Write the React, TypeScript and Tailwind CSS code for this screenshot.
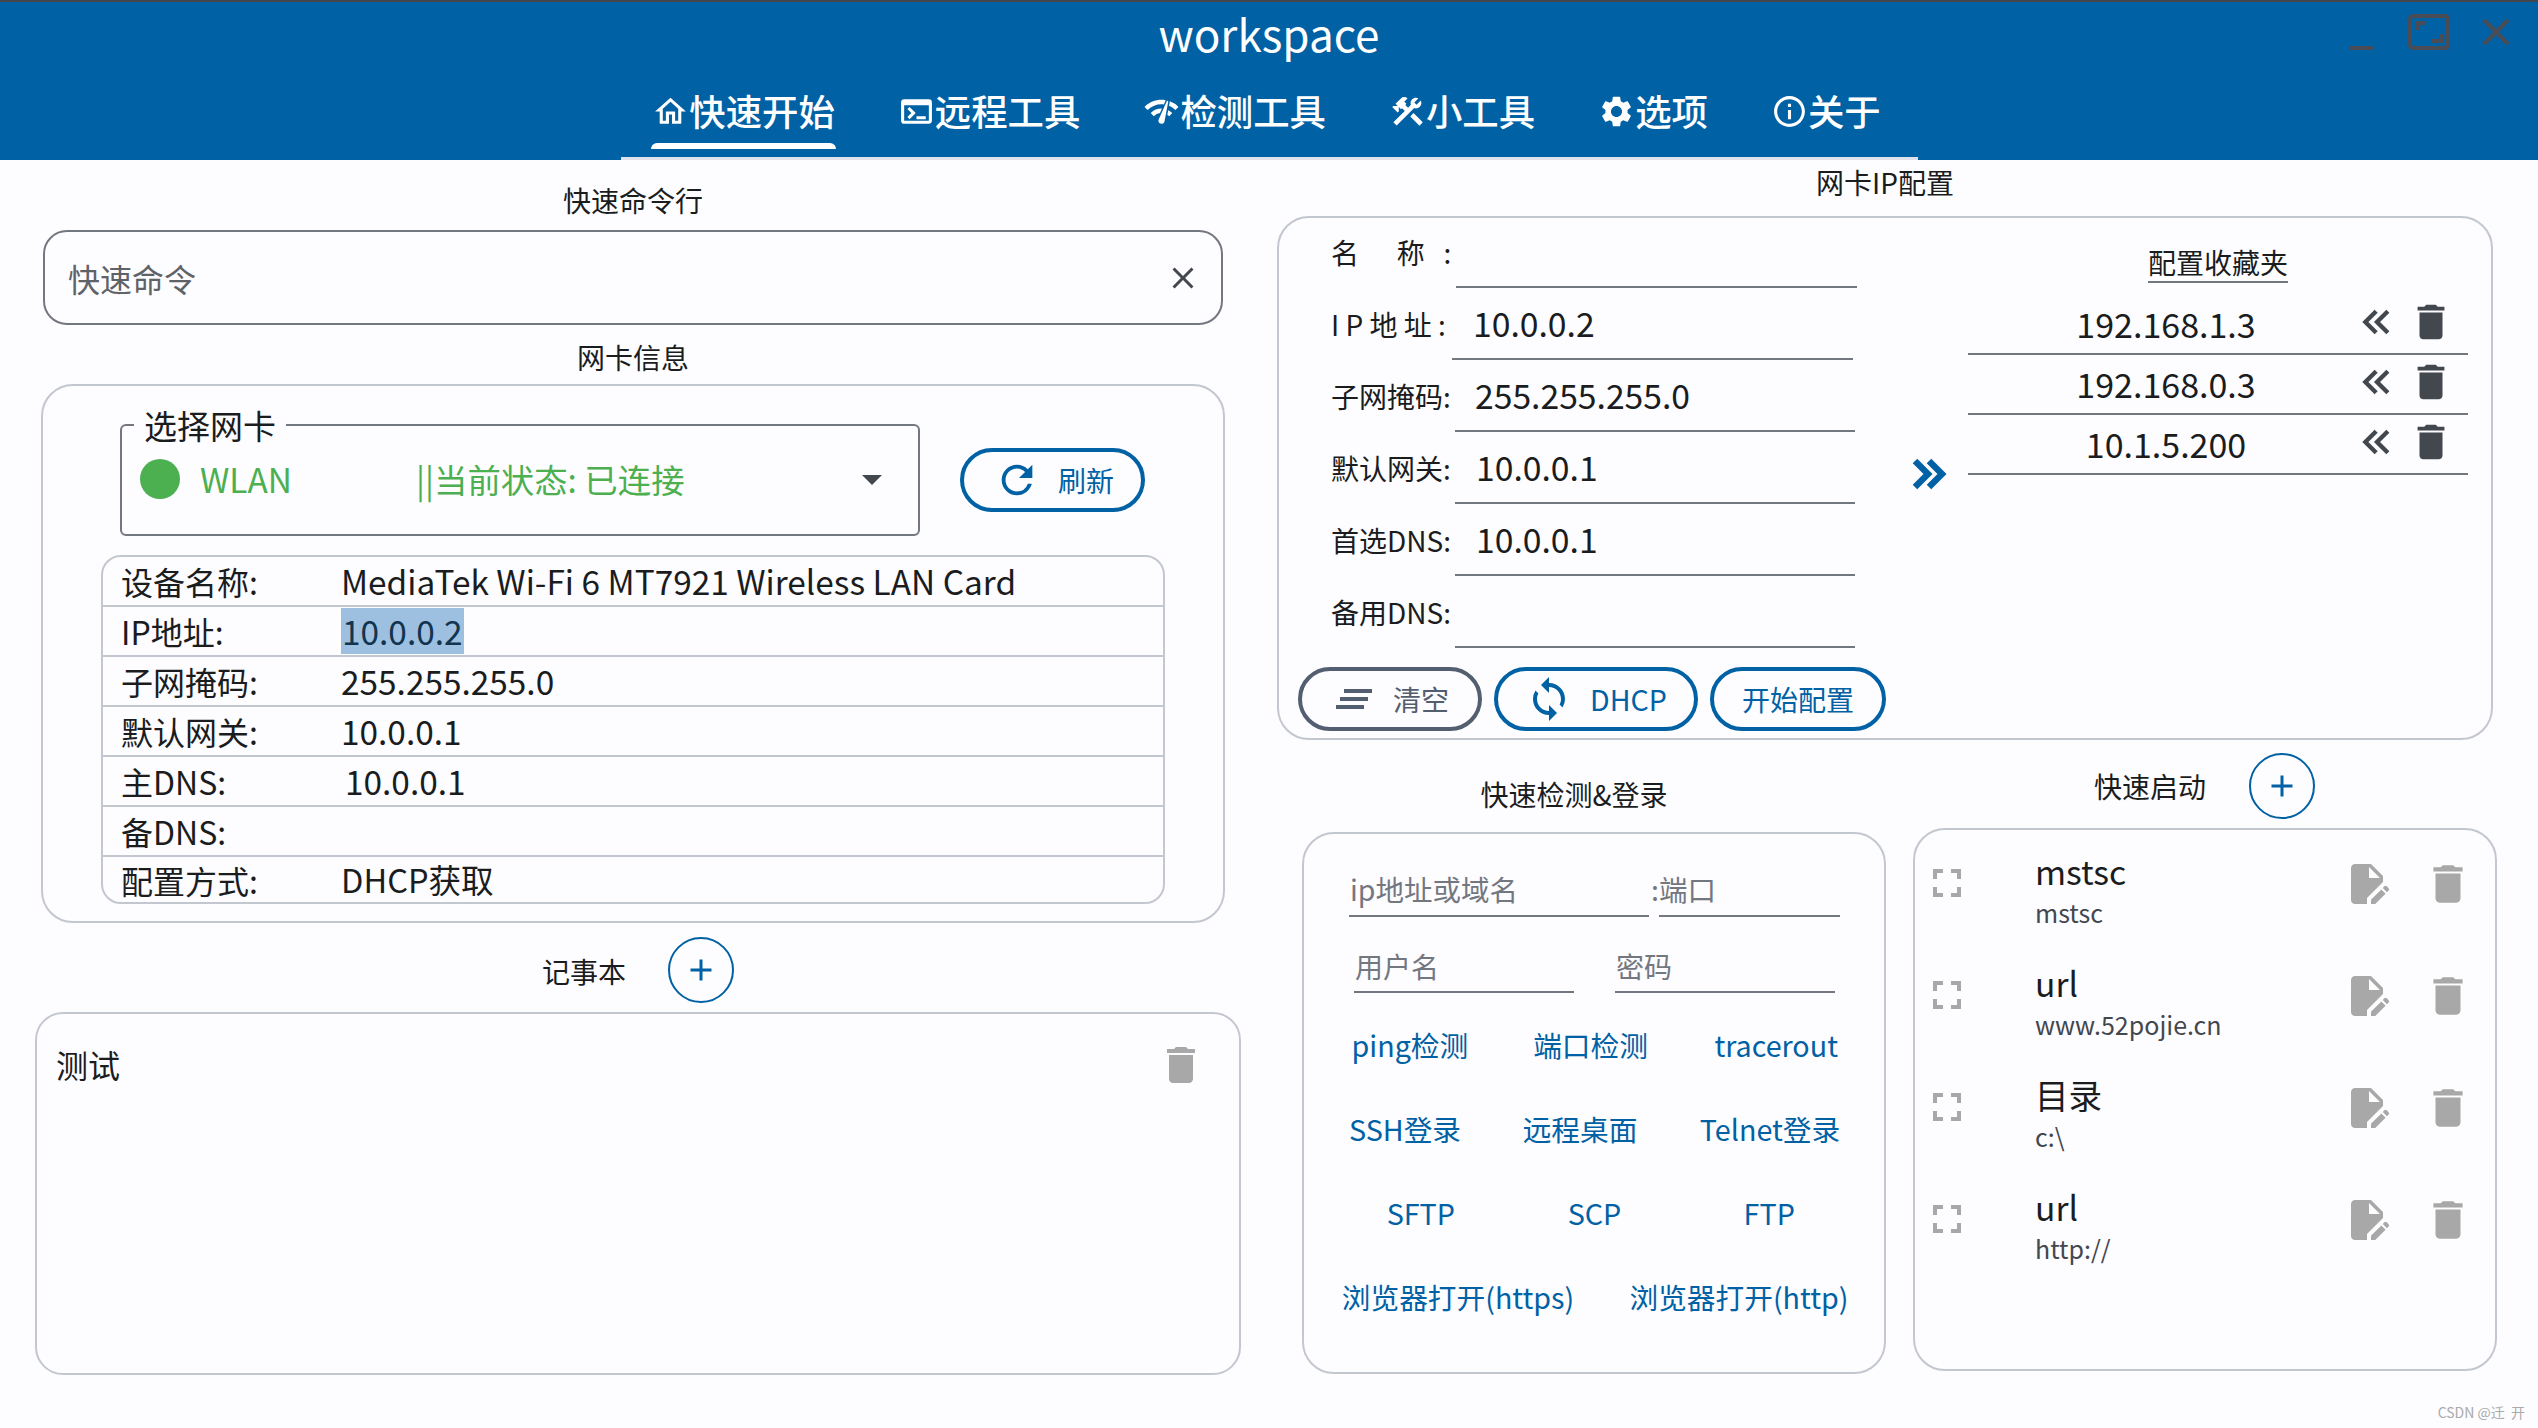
import React from "react";
import {
  MdOutlineHome, MdOutlineTerminal, MdNetworkCheck, MdConstruction, MdSettings, MdInfoOutline,
  MdRefresh, MdSync, MdClearAll,
  MdDelete, MdEditDocument, MdFullscreen, MdAdd, MdClose, MdArrowDropDown,
} from "react-icons/md";

const tabs = [
  { icon: MdOutlineHome, label: "快速开始", active: true },
  { icon: MdOutlineTerminal, label: "远程工具" },
  { icon: MdNetworkCheck, label: "检测工具" },
  { icon: MdConstruction, label: "小工具" },
  { icon: MdSettings, label: "选项" },
  { icon: MdInfoOutline, label: "关于" },
];

const netInfo = [
  { k: "设备名称:", v: "MediaTek Wi-Fi 6 MT7921 Wireless LAN Card", c: "text-[33.4px]" },
  { k: "IP地址:", v: "10.0.0.2", c: "hl" },
  { k: "子网掩码:", v: "255.255.255.0", c: "text-[33.4px]" },
  { k: "默认网关:", v: "10.0.0.1", c: "text-[33.4px]" },
  { k: "主DNS:", v: "10.0.0.1", c: "ml-[4px] text-[33.4px]" },
  { k: "备DNS:", v: "", c: "" },
  { k: "配置方式:", v: "DHCP获取", c: "text-[32.6px]" },
];

const formRows = [
  { k: "名\u00a0\u00a0\u00a0\u00a0\u00a0\u00a0称\u00a0\u00a0\u00a0:", v: "", f: "ml-[158px] w-[401px]", val: "" },
  { k: "I P 地 址 :", v: "10.0.0.2", f: "ml-[154px] w-[401px]", val: "pl-[21px]" },
  { k: "子网掩码:", v: "255.255.255.0", f: "ml-[157px] w-[400px]", val: "pl-[20px]" },
  { k: "默认网关:", v: "10.0.0.1", f: "ml-[157px] w-[400px]", val: "pl-[21px]" },
  { k: "首选DNS:", v: "10.0.0.1", f: "ml-[157px] w-[400px]", val: "pl-[21px]" },
  { k: "备用DNS:", v: "", f: "ml-[157px] w-[400px]", val: "" },
];

const favs = ["192.168.1.3", "192.168.0.3", "10.1.5.200"];

const actionRows = [
  [["ping检测", "w-[206px]"], ["端口检测", "w-[156px]"], ["tracerout", "w-[216px]"]],
  [["SSH登录", "w-[196px]"], ["远程桌面", "w-[154px]"], ["Telnet登录", "w-[226px]"]],
  [["SFTP", "w-[228px]"], ["SCP", "w-[120px]"], ["FTP", "w-[230px]"]],
  [["浏览器打开(https)", "w-[302px]"], ["浏览器打开(http)", "w-[260px]"]],
];

const starts = [
  { n: "mstsc", s: "mstsc" },
  { n: "url", s: "www.52pojie.cn" },
  { n: "目录", s: "c:\\" },
  { n: "url", s: "http://" },
];

function Chevrons({ dir, size, width }: { dir: "left" | "right"; size: number; width: number }) {
  return (
    <svg width={size} height={size} viewBox="0 0 24 24" fill="none" stroke="currentColor" strokeWidth={width} className="shrink-0">
      {dir === "right" ? <path d="M5.5 5.5L12 12l-6.5 6.5M12.5 5.5L19 12l-6.5 6.5" /> : <path d="M18.5 5.5L12 12l6.5 6.5M11.5 5.5L5 12l6.5 6.5" />}
    </svg>
  );
}

function PlusCircle() {
  return (
    <button className="flex h-[66px] w-[66px] items-center justify-center rounded-full border-2 border-[#0061a4] text-[#0061a4]">
      <MdAdd size={36} />
    </button>
  );
}

export default function App() {
  return (
    <div className="relative h-[1428px] w-[2538px] overflow-hidden bg-[#fdfcff] font-['Noto_Sans_CJK_SC','Noto_Sans',sans-serif] text-[#1a1c1e]">
      <header className="relative h-[160px] bg-[#0061a4] text-white">
        <div className="h-[2px] bg-[#44474e]" />
        <h1 className="pt-[1px] text-center text-[44px] font-normal leading-[60px]">workspace</h1>
        <div className="absolute right-[28px] top-[14px] flex items-start text-[#4a4d55]">
          <div className="mt-[32px] h-[4px] w-[24px] bg-[#4a4d55]" />
          <svg width="42" height="36" viewBox="0 0 42 36" fill="none" stroke="currentColor" strokeWidth="4" className="ml-[35px]">
            <rect x="2" y="2" width="38" height="32" rx="3" />
            <path d="M9 16V9h9M33 20v7h-9" strokeWidth="4" />
          </svg>
          <svg width="28" height="28" viewBox="0 0 28 28" fill="none" stroke="currentColor" strokeWidth="4" className="ml-[32px] mt-[4px]">
            <path d="M2 2l24 24M26 2L2 26" />
          </svg>
        </div>
        <nav className="mx-auto mt-[19px] flex h-[78px] w-[1297px] justify-center gap-[61px] border-b-[3px] border-[#e0e2ec] pr-[5px]">
          {tabs.map((t) => {
            const I = t.icon;
            return (
              <div key={t.label} className="relative flex h-[75px] items-start px-[1px]">
                <I size={37} className="mt-[11px] shrink-0" />
                <span className="mt-[1px] whitespace-nowrap text-[36.4px] font-medium leading-[54px]">{t.label}</span>
                {t.active && <div className="absolute bottom-[8px] left-0 right-0 h-[6px] rounded-t-[6px] bg-white" />}
              </div>
            );
          })}
        </nav>
      </header>

      <main className="flex">
        <section className="w-[1266px] shrink-0">
          <h2 className="mt-[20px] text-center text-[28px] font-normal leading-[40px]">快速命令行</h2>
          <div className="ml-[43px] mt-[10px] flex h-[95px] w-[1180px] items-center justify-between rounded-[24px] border-2 border-[#73777f] pl-[23px] pr-[20px]">
            <span className="text-[32px] text-[#5f6368]">快速命令</span>
            <MdClose size={36} className="text-[#43474e]" />
          </div>
          <h2 className="mt-[12px] text-center text-[28px] font-normal leading-[40px]">网卡信息</h2>
          <div className="ml-[41px] mt-[7px] h-[539px] w-[1184px] rounded-[32px] border-2 border-[#c3c7cf]">
            <div className="flex pl-[77px] pt-[20px]">
              <fieldset className="h-[130px] w-[800px] rounded-[6px] border-2 border-[#73777f] pl-[18px] pr-[12px]">
                <legend className="ml-[-6px] px-[10px] text-[33px] leading-[38px]">选择网卡</legend>
                <div className="mt-[2px] flex h-[66px] items-center text-[33.4px] text-[#4caf50]">
                  <span className="h-[40px] w-[40px] rounded-full bg-[#4caf50]" />
                  <span className="ml-[20px] w-[216px]">WLAN</span>
                  <span className="flex-1">||当前状态: 已连接</span>
                  <MdArrowDropDown size={48} className="mr-[10px] text-[#43474e]" />
                </div>
              </fieldset>
              <button className="ml-[40px] mt-[42px] flex h-[64px] w-[185px] items-center rounded-full border-4 border-[#0061a4] pl-[30px] text-[#0061a4]">
                <MdRefresh size={46} />
                <span className="ml-[18px] text-[28px]">刷新</span>
              </button>
            </div>
            <div className="ml-[58px] mt-[19px] w-[1064px] overflow-hidden rounded-[20px] border-2 border-[#c3c7cf]">
              {netInfo.map((r, i) => (
                <div key={r.k} className={`flex items-center pl-[18px] text-[32px] ${i < 6 ? "h-[50px] border-b-2 border-[#c3c7cf]" : "h-[45px]"}`}>
                  <span className="w-[220px] shrink-0">{r.k}</span>
                  {r.c === "hl" ? (
                    <span className="bg-[#9dc0e0] px-[1px] text-[33.4px] leading-[46px] text-[#12344f]">{r.v}</span>
                  ) : (
                    <span className={r.c}>{r.v}</span>
                  )}
                </div>
              ))}
            </div>
          </div>
          <div className="mt-[14px] flex items-center pl-[542px]">
            <h2 className="mt-[1px] text-[28px] font-normal leading-[40px]">记事本</h2>
            <div className="ml-[42px]"><PlusCircle /></div>
          </div>
          <div className="ml-[35px] mt-[9px] flex h-[363px] w-[1206px] items-start justify-between rounded-[28px] border-2 border-[#c3c7cf] pl-[19px] pr-[34px] pt-[27px]">
            <span className="text-[32px] leading-[46px]">测试</span>
            <MdDelete size={48} className="text-[#a8a8a8]" />
          </div>
        </section>

        <section className="ml-[11px] w-[1250px] shrink-0">
          <h2 className="mt-[2px] w-[1216px] text-center text-[28px] font-normal leading-[40px]">网卡IP配置</h2>
          <div className="mt-[14px] flex h-[524px] w-[1216px] rounded-[32px] border-2 border-[#c3c7cf] pl-[19px]">
            <div className="-mt-[2px] w-[590px] shrink-0">
              {formRows.map((r) => (
                <div key={r.k} className="relative flex h-[72px] items-center text-[28px]">
                  <div className={`flex h-[72px] items-center border-b-2 border-[#73777f] ${r.f}`}>
                    <span className={`mt-[1px] text-[33.7px] ${r.val}`}>{r.v}</span>
                  </div>
                  <span className="absolute left-[33px] whitespace-nowrap leading-[40px]">{r.k}</span>
                </div>
              ))}
              <div className="mt-[19px] flex gap-[12px]">
                <button className="flex h-[64px] w-[184px] items-center rounded-full border-4 border-[#535f70] pl-[28px] text-[#535f70]">
                  <MdClearAll size={48} />
                  <span className="ml-[15px] text-[28px]">清空</span>
                </button>
                <button className="flex h-[64px] w-[204px] items-center rounded-full border-4 border-[#0061a4] pl-[27px] text-[#0061a4]">
                  <MdSync size={48} />
                  <span className="ml-[17px] text-[28.6px]">DHCP</span>
                </button>
                <button className="h-[64px] w-[176px] rounded-full border-4 border-[#0061a4] text-[28px] text-[#0061a4]">开始配置</button>
              </div>
            </div>
            <div className="flex w-[80px] shrink-0 justify-center pt-[232px] text-[#0061a4]">
              <Chevrons dir="right" size={48} width={3.2} />
            </div>
            <div className="w-[500px] shrink-0">
              <div className="flex justify-center pt-[25px]">
                <span className="border-b-2 border-[#73777f] text-[28px] leading-[38px]">配置收藏夹</span>
              </div>
              <div className="mt-[12px]">
                {favs.map((f) => (
                  <div key={f} className="flex h-[60px] items-center border-b-2 border-[#73777f] text-[#43474e]">
                    <span className="mt-[-1px] w-[396px] text-center text-[34px] text-[#1a1c1e]">{f}</span>
                    <span className="-ml-[7px] mt-[-4px]"><Chevrons dir="left" size={40} width={2.6} /></span>
                    <MdDelete size={46} className="ml-[11px] mt-[-4px]" />
                  </div>
                ))}
              </div>
            </div>
          </div>

          <div className="flex">
            <div className="ml-[25px] w-[584px] shrink-0">
              <h2 className="mt-[34px] w-[544px] text-center text-[28px] font-normal leading-[40px]">快速检测&登录</h2>
              <div className="mt-[18px] h-[542px] rounded-[32px] border-2 border-[#c3c7cf]">
                <div className="mt-[33px] flex h-[50px] text-[28.5px] text-[#73777f]">
                  <div className="ml-[45px] flex w-[300px] items-center border-b-2 border-[#73777f]"><span className="ml-[1px] mt-[-3px]">ip地址或域名</span></div>
                  <div className="relative ml-[10px] flex w-[181px] items-center border-b-2 border-[#73777f]"><span className="-ml-[8px] mt-[-3px]">:端口</span></div>
                </div>
                <div className="mt-[26px] flex h-[50px] text-[28px] text-[#73777f]">
                  <div className="ml-[50px] flex w-[220px] items-center border-b-2 border-[#73777f]"><span className="ml-[1px] mt-[-3px]">用户名</span></div>
                  <div className="ml-[41px] flex w-[220px] items-center border-b-2 border-[#73777f]"><span className="ml-[1px] mt-[-3px]">密码</span></div>
                </div>
                <div className="mt-[10px] text-[28.7px] text-[#0061a4]">
                  {actionRows.map((row, i) => (
                    <div key={i} className="flex h-[84px] items-center pl-[3px]">
                      {row.map(([t, w]) => (
                        <span key={t} className={`whitespace-nowrap text-center ${w}`}>{t}</span>
                      ))}
                    </div>
                  ))}
                </div>
              </div>
            </div>
            <div className="ml-[27px] w-[584px] shrink-0">
              <div className="mt-[13px] flex h-[66px] items-center">
                <h2 className="ml-[181px] text-[28px] font-normal leading-[40px]">快速启动</h2>
                <div className="ml-[43px]"><PlusCircle /></div>
              </div>
              <div className="mt-[9px] h-[543px] rounded-[32px] border-2 border-[#c3c7cf] pt-[19px]">
                {starts.map((s, i) => (
                  <div key={i} className="flex h-[112px] items-start">
                    <MdFullscreen size={48} className="ml-[8px] mt-[10px] shrink-0 text-[#a8a8a8]" />
                    <div className="ml-[64px] w-[308px]">
                      <div className="text-[33.6px] leading-[44px]">{s.n}</div>
                      <div className="text-[25px] leading-[38px] text-[#43474e]">{s.s}</div>
                    </div>
                    <MdEditDocument size={48} className="mt-[11px] text-[#a8a8a8]" />
                    <MdDelete size={50} className="ml-[32px] mt-[10px] text-[#a8a8a8]" />
                  </div>
                ))}
              </div>
            </div>
          </div>
        </section>
      </main>
      <div className="absolute bottom-[6px] right-[13px] text-[14px] leading-[20px] text-[#aaaaaa]">CSDN @迁&nbsp;&nbsp;开</div>
    </div>
  );
}
